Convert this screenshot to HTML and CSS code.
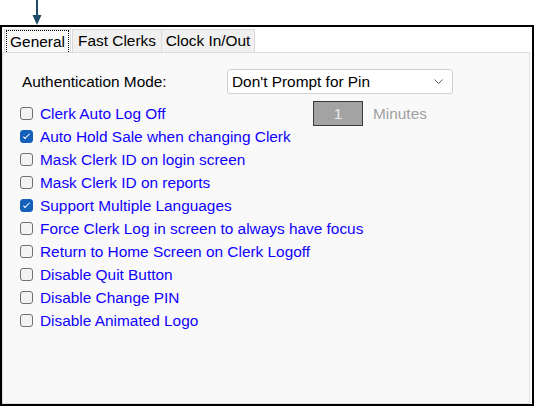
FILE: index.html
```html
<!DOCTYPE html>
<html>

<head>
  <meta charset="UTF-8">
  <link rel="stylesheet" href="styles.css">
  <title>Clerk Settings</title>
</head>

<body>
<svg class="pointer" width="60" height="25" viewBox="0 0 60 25">
  <rect x="36" y="0" width="2" height="16" fill="#1d4b68"/>
  <polygon points="32.5,15 41.5,15 37,25" fill="#1d4b68"/>
</svg>

<div class="window">
  <div class="tabs">
    <div class="tab tab-general active"><span class="focus">General</span></div>
    <div class="tab tab-fast">Fast Clerks</div>
    <div class="tab tab-clock">Clock In/Out</div>
  </div>
  <div class="panel">
    <div class="auth-row">
      <span class="auth-label">Authentication Mode:</span>
      <div class="dropdown">
        <span>Don't Prompt for Pin</span>
        <svg width="9" height="5" viewBox="0 0 9 5">
          <polyline points="0.5,0.5 4.5,4.5 8.5,0.5" fill="none" stroke="#606060" stroke-width="1"/>
        </svg>
      </div>
    </div>
    <div class="options">
      <div class="option">
        <input type="checkbox" id="opt1">
        <label for="opt1" class="option-text wide">Clerk Auto Log Off</label>
        <input class="minutes-input" type="text" value="1" readonly>
        <span class="minutes">Minutes</span>
      </div>
      <div class="option">
        <input type="checkbox" id="opt2" checked>
        <label for="opt2" class="option-text">Auto Hold Sale when changing Clerk</label>
      </div>
      <div class="option">
        <input type="checkbox" id="opt3">
        <label for="opt3" class="option-text">Mask Clerk ID on login screen</label>
      </div>
      <div class="option">
        <input type="checkbox" id="opt4">
        <label for="opt4" class="option-text">Mask Clerk ID on reports</label>
      </div>
      <div class="option">
        <input type="checkbox" id="opt5" checked>
        <label for="opt5" class="option-text">Support Multiple Languages</label>
      </div>
      <div class="option">
        <input type="checkbox" id="opt6">
        <label for="opt6" class="option-text">Force Clerk Log in screen to always have focus</label>
      </div>
      <div class="option">
        <input type="checkbox" id="opt7">
        <label for="opt7" class="option-text">Return to Home Screen on Clerk Logoff</label>
      </div>
      <div class="option">
        <input type="checkbox" id="opt8">
        <label for="opt8" class="option-text">Disable Quit Button</label>
      </div>
      <div class="option">
        <input type="checkbox" id="opt9">
        <label for="opt9" class="option-text">Disable Change PIN</label>
      </div>
      <div class="option">
        <input type="checkbox" id="opt10">
        <label for="opt10" class="option-text">Disable Animated Logo</label>
      </div>
    </div>
  </div>
</div>

</body>
</html>
```

FILE: styles.css
```css
body {
    font-family: 'Liberation Sans', Arial, sans-serif;
    font-size: 15.4px;
    background-color: #fff;
    color: #000;
    margin: 0;
    padding: 0;
    width: 534px;
    height: 406px;
    overflow: hidden;
}

.pointer {
    display: block;
}

.window {
    box-sizing: border-box;
    width: 534px;
    height: 381px;
    border: 2px solid #000;
    padding-top: 2px;
    display: flex;
    flex-direction: column;
}

.tabs {
    display: flex;
    padding-left: 2px;
    height: 23px;
}

.tab {
    box-sizing: border-box;
    height: 23px;
    border: 1px solid #dadada;
    border-bottom: none;
    background: #f0f0f0;
    display: flex;
    align-items: center;
    justify-content: center;
}

.tab-general {
    width: 67px;
    margin-right: 1px;
}

.tab-fast {
    width: 90px;
}

.tab-clock {
    width: 93px;
    border-left: none;
}

.tab.active {
    background: #f9f9f9;
    padding: 0 1px 0 1px;
    align-items: stretch;
}

.focus {
    flex: 1;
    border: 1px dotted #000;
    border-bottom: none;
    display: flex;
    align-items: center;
    justify-content: center;
}

.panel {
    flex: 1;
    margin-right: 2px;
    background: #f9f9f9;
    border: 1px solid #dcdcdc;
    padding: 16px 0 0 17px;
}

.auth-row {
    display: flex;
    align-items: center;
    height: 25px;
}

.auth-label {
    width: 205px;
    padding-left: 2px;
}

.dropdown {
    box-sizing: border-box;
    width: 226px;
    height: 25px;
    background: #fff;
    border: 1px solid #cfcfcf;
    border-radius: 3px;
    display: flex;
    align-items: center;
    justify-content: space-between;
    padding: 0 9px 0 4px;
}

.options {
    margin-top: 8px;
}

.option {
    display: flex;
    align-items: center;
    height: 23px;
}

.option input[type="checkbox"] {
    appearance: none;
    box-sizing: border-box;
    width: 13px;
    height: 13px;
    margin: 0 7px 0 0;
    border: 1px solid #707070;
    border-radius: 3px;
    background: #f3f3f3;
    position: relative;
}

.option input[type="checkbox"]:checked {
    background: #1560b8;
    border-color: #1560b8;
}

.option input[type="checkbox"]:checked::after {
    content: "";
    position: absolute;
    left: 4px;
    top: 1px;
    width: 2px;
    height: 6px;
    border: solid #fff;
    border-width: 0 1px 1px 0;
    transform: rotate(45deg);
}

.option-text {
    color: #1000ff;
}

.option-text.wide {
    width: 273px;
}

.minutes-input {
    box-sizing: border-box;
    width: 50px;
    height: 25px;
    flex-shrink: 0;
    border: 1px solid #3a3a3a;
    background: #a3a3a3;
    color: #ececec;
    font: inherit;
    text-align: center;
    padding: 0;
    outline: none;
}

.minutes {
    margin-left: 10px;
    color: #a0a0a0;
}
```
